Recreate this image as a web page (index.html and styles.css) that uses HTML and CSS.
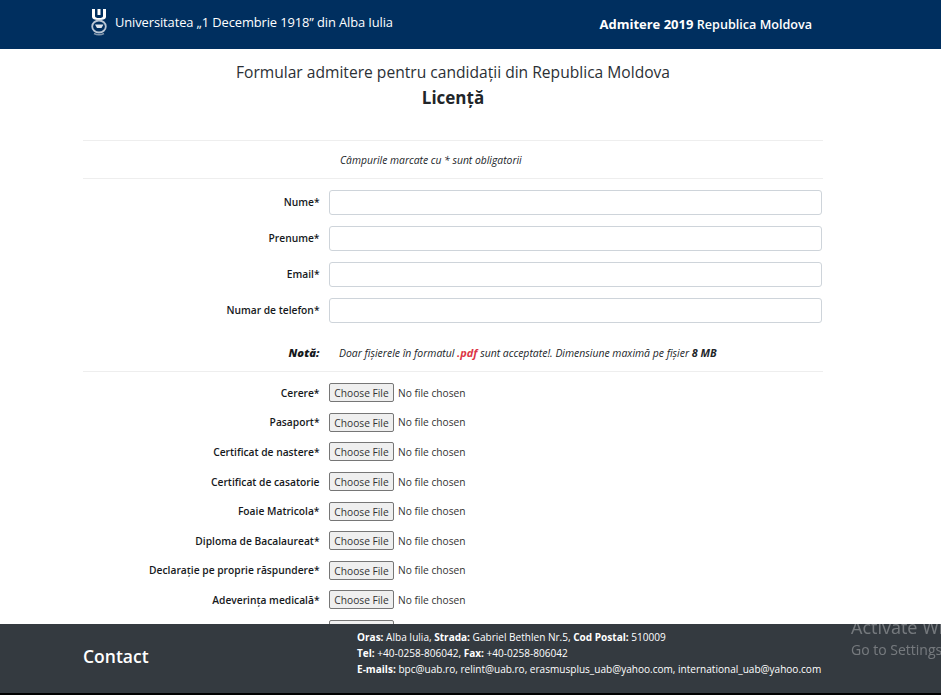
FILE: index.html
```html
<!DOCTYPE html>
<html lang="ro">
<head>
<meta charset="utf-8">
<title>Admitere 2019 Republica Moldova</title>
<link rel="stylesheet" href="styles.css">
</head>
<body>
<header class="topbar">
  <div class="topbar-inner">
    <div class="brand">
      <svg class="logo" width="18" height="28" viewBox="0 0 18 28" aria-hidden="true">
        <path d="M2 1h3v7q0 2 4 2t4-2V1h3v8q0 3-7 3t-7-3z" fill="#fff"/>
        <rect x="7.5" y="1" width="3" height="6" fill="#fff"/>
        <ellipse cx="9" cy="18.5" rx="6.8" ry="6" fill="none" stroke="#b9c6d4" stroke-width="1.8"/>
        <path d="M5 16.5h8.5l-2 3.5H7z" fill="#dfe5ec"/>
        <path d="M4 25.5q5 2.5 10 0" fill="none" stroke="#7f94ab" stroke-width="1.4"/>
      </svg>
      <span>Universitatea „1 Decembrie 1918” din Alba Iulia</span>
    </div>
    <div class="admitere"><b>Admitere 2019</b> <span class="admitere-sub">Republica Moldova</span></div>
  </div>
</header>
<main class="page">
  <h2 class="title">Formular admitere pentru candidații din Republica Moldova</h2>
  <h1 class="subtitle">Licență</h1>
  <hr class="rule rule-first">
  <p class="hint">Câmpurile marcate cu * sunt obligatorii</p>
  <hr class="rule">
  <form class="fields">
    <div class="row text-row"><label>Nume*</label><input type="text"></div>
    <div class="row text-row"><label>Prenume*</label><input type="text"></div>
    <div class="row text-row"><label>Email*</label><input type="text"></div>
    <div class="row text-row"><label>Numar de telefon*</label><input type="text"></div>
    <div class="row note-row"><label class="note-label">Notă:</label><p class="note">Doar fișierele în formatul <b class="pdf">.pdf</b> sunt acceptate!. Dimensiune maximă pe fișier <b class="size">8 MB</b></p></div>
    <hr class="rule rule-note">
    <div class="row file-row"><label>Cerere*</label><div class="file"><span class="choose">Choose File</span><span>No file chosen</span></div></div>
    <div class="row file-row"><label>Pasaport*</label><div class="file"><span class="choose">Choose File</span><span>No file chosen</span></div></div>
    <div class="row file-row"><label>Certificat de nastere*</label><div class="file"><span class="choose">Choose File</span><span>No file chosen</span></div></div>
    <div class="row file-row"><label>Certificat de casatorie</label><div class="file"><span class="choose">Choose File</span><span>No file chosen</span></div></div>
    <div class="row file-row"><label>Foaie Matricola*</label><div class="file"><span class="choose">Choose File</span><span>No file chosen</span></div></div>
    <div class="row file-row"><label>Diploma de Bacalaureat*</label><div class="file"><span class="choose">Choose File</span><span>No file chosen</span></div></div>
    <div class="row file-row"><label>Declarație pe proprie răspundere*</label><div class="file"><span class="choose">Choose File</span><span>No file chosen</span></div></div>
    <div class="row file-row"><label>Adeverința medicală*</label><div class="file"><span class="choose">Choose File</span><span>No file chosen</span></div></div>
    <div class="row file-row"><label></label><div class="file"><span class="choose">Choose File</span><span>No file chosen</span></div></div>
  </form>
</main>
<footer class="footer">
  <div class="footer-inner">
    <div class="contact">Contact</div>
    <div class="details">
      <div><b>Oras:</b> Alba Iulia, <b>Strada:</b> Gabriel Bethlen Nr.5, <b>Cod Postal:</b> 510009</div>
      <div><b>Tel:</b> +40-0258-806042, <b>Fax:</b> +40-0258-806042</div>
      <div><b>E-mails:</b> bpc@uab.ro, relint@uab.ro, erasmusplus_uab@yahoo.com, international_uab@yahoo.com</div>
    </div>
  </div>
</footer>
<div class="watermark">
  <div class="wm-big">Activate Windows</div>
  <div class="wm-small">Go to Settings to activate Windows.</div>
</div>
</body>
</html>
```

FILE: styles.css
```css
* { box-sizing: border-box; }
html, body { height: 100%; }
body {
  margin: 0;
  height: 695px;
  overflow: hidden;
  background: #fff;
  color: #212529;
  font-family: "Open Sans", "Noto Sans", sans-serif;
  font-size: 12px;
}
.topbar { height: 49px; background: #002f5f; color: #fff; }
.topbar-inner {
  width: 729px;
  margin-left: 83px;
  height: 49px;
  display: flex;
  justify-content: space-between;
  align-items: center;
}
.brand { display: flex; align-items: center; gap: 7px; padding-left: 7px; font-size: 12.9px; margin-top: -5px; letter-spacing: -0.1px; }
.logo { display: block; }
.admitere { font-size: 13px; margin-top: -2px; }
.admitere b { font-size: 13px; }
.admitere-sub { font-weight: 600; font-size: 12.6px; }
.page { width: 740px; margin-left: 83px; }
.title { margin: 13px 0 0; text-align: center; font-size: 15.6px; line-height: 20px; font-weight: 500; color: #2b3035; }
.subtitle { margin: 4px 0 0; text-align: center; font-size: 17px; line-height: 24px; font-weight: 700; color: #212529; }
.rule { border: 0; border-top: 1px solid #eee; margin: 0; }
.rule-first { margin-top: 30px; }
.hint { margin: 0; height: 37px; line-height: 38px; padding-left: 257px; font-size: 10.35px; font-style: italic; }
.fields { display: block; padding-top: 11px; }
.row { display: grid; grid-template-columns: 236.5px 493px; column-gap: 9.5px; }
.row label { text-align: right; font-weight: 600; font-size: 10.25px; color: #16191c; }
.text-row { height: 36px; align-items: start; }
.text-row label { line-height: 25px; }
.text-row input {
  display: block;
  width: 493px;
  height: 25px;
  border: 1px solid #ced4da;
  border-radius: 3px;
  background: #fff;
}
.note-row { height: 30px; margin-top: 3px; align-items: center; }
.note-row .note-label { font-style: italic; font-size: 11.2px; font-weight: 800; }
.note { margin: 0 0 0 10px; font-size: 10.45px; font-style: italic; white-space: nowrap; }
.pdf { color: #dc3545; font-size: 11px; }
.size { font-size: 10.8px; color: #212529; }
.rule-note { margin-top: 4px; margin-bottom: 6px; }
.file-row { height: 29.6px; align-items: center; }
.file { display: flex; align-items: center; gap: 4px; font-size: 10.2px; color: #333; }
.choose {
  display: block;
  width: 65px;
  height: 19px;
  line-height: 18px;
  text-align: center;
  background: #efefef;
  border: 1px solid #767676;
  border-radius: 2px;
  color: #333;
}
.footer {
  position: fixed;
  left: 0;
  right: 0;
  bottom: 0;
  height: 71px;
  background: #343a40;
  border-bottom: 2px solid #000;
  color: #fff;
}
.footer-inner {
  width: 740px;
  margin-left: 83px;
  height: 69px;
  display: flex;
  align-items: center;
}
.contact { width: 274px; font-size: 17.5px; font-weight: 600; margin-top: -5px; }
.details { font-size: 10.05px; line-height: 16px; white-space: nowrap; margin-top: -11px; }
.watermark {
  position: fixed;
  left: 851px;
  top: 615px;
  white-space: nowrap;
  color: rgba(255,255,255,0.32);
}
.wm-big { font-size: 18px; line-height: 24px; }
.wm-small { font-size: 14px; line-height: 21px; }
```
